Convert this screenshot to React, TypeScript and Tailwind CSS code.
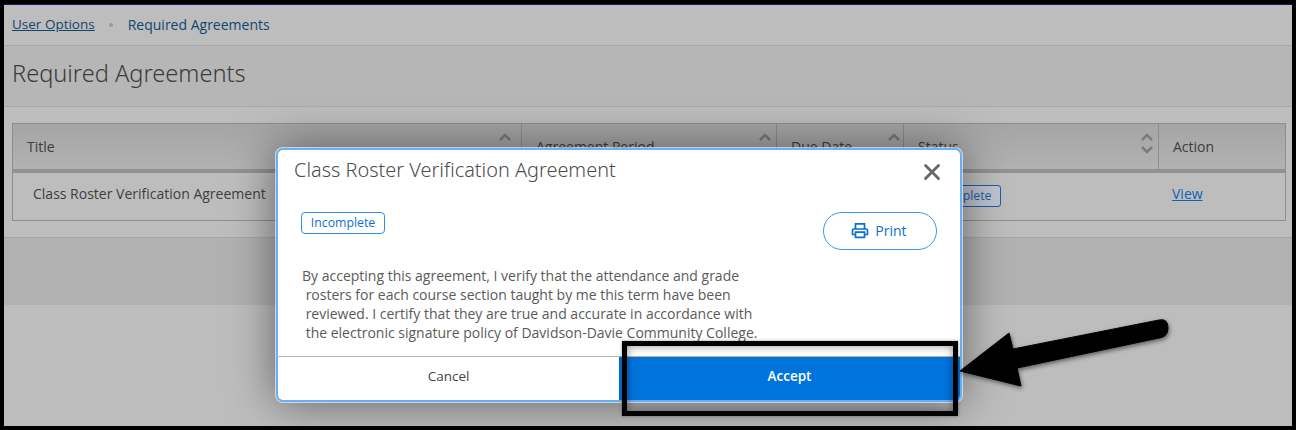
import React from "react";
import { X } from "lucide-react";

const Sort = ({ down = true, pos }: { down?: boolean; pos: string }) => (
  <div className={`absolute top-[9px] flex flex-col gap-[3px] ${pos}`}>
    <svg width="14" height="9" viewBox="0 0 14 9" fill="none" stroke="#7c7c7c" strokeWidth="2.6"><path d="M2 7l5-5 5 5" /></svg>
    {down ? <svg width="14" height="9" viewBox="0 0 14 9" fill="none" stroke="#7c7c7c" strokeWidth="2.6"><path d="M2 2l5 5 5-5" /></svg> : null}
  </div>
);

const Head = ({ label, pos, down, last }: { label: string; pos?: string; down?: boolean; last?: boolean }) => (
  <div className={`relative flex items-center pl-[14px] h-full ${last ? "" : "border-r border-[#8e8e8e]"}`}>
    <span>{label}</span>
    {pos ? <Sort down={down} pos={pos} /> : null}
  </div>
);

const Printer = () => (
  <svg width="18" height="17" viewBox="0 0 18 17" fill="none" stroke="#0b6fd0" strokeWidth="1.7">
    <path d="M4.5 7V1.8h9V7" />
    <path d="M4.5 12.5H1.5V8.5a1.5 1.5 0 0 1 1.5-1.5h12a1.5 1.5 0 0 1 1.5 1.5v4h-3" />
    <path d="M4.5 10.2h9v5.2h-9z" />
  </svg>
);

export default function App() {
  return (
    <div className="w-[1296px] h-[430px] bg-black pt-[4px] px-[4px] pb-[4px] overflow-hidden font-['Open_Sans',sans-serif]">
      <div className="relative w-full h-full bg-[#bdbdbd] border-t border-[#16186a] flex flex-col text-[14px] text-[#3d3d3d]">
        <div className="h-[41px] shrink-0 border-b border-[#aaaaaa] flex items-center pl-[8px] pb-[1px]">
          <a className="underline text-[13.5px] text-[#11456f]">User Options</a>
          <span className="w-[4px] h-[4px] ml-[14px] mr-[15px] bg-[#9a9a9a] rounded-full" />
          <span className="text-[#11456f]">Required Agreements</span>
        </div>
        <div className="h-[61px] shrink-0 bg-[#b6b6b6] border-b border-[#aaaaaa] flex items-center pl-[8px] pb-[5px]">
          <h1 className="text-[23.6px] font-light font-['Noto_Sans',sans-serif] text-[#3b3b3b]">Required Agreements</h1>
        </div>
        <div className="h-[131px] shrink-0 border-b border-[#a6a6a6] px-[8px] pt-[16px]">
          <div className="w-[1274px] h-[98px] border border-[#8e8e8e] flex flex-col">
            <div className="h-[45px] shrink-0 grid grid-cols-[509px_255px_127px_255px_126px] items-center bg-gradient-to-b from-[#a5a5a5] to-[#b2b2b2] border-b-[4px] border-[#929292] box-content">
              <Head label="Title" pos="right-[9px]" down={false} />
              <Head label="Agreement Period" pos="right-[4px]" down={false} />
              <Head label="Due Date" pos="right-[2px]" down={false} />
              <Head label="Status" pos="right-[4px]" />
              <Head label="Action" last />
            </div>
            <div className="flex-1 grid grid-cols-[509px_255px_127px_255px_126px] items-center pb-[7px]">
              <div className="pl-[20px]">Class Roster Verification Agreement</div>
              <div />
              <div />
              <div className="pl-[14px] pt-[5px]">
                <span className="inline-block border border-[#1b5da6] rounded-[3px] pl-[8px] pr-[9px] h-[22px] leading-[20px] text-[12.3px] text-[#1b5da6] bg-[#bcc4cf]">Incomplete</span>
              </div>
              <div className="pl-[13px]"><a className="underline text-[#0f62b5]">View</a></div>
            </div>
          </div>
        </div>
        <div className="h-[67px] shrink-0 bg-[#b1b1b1]" />
        <div className="flex-1" />

        {/* modal */}
        <div className="absolute left-[272px] top-[143px] w-[686px] h-[254px] bg-white border-2 border-[#68b0f4] rounded-[7px] shadow-[0_0_0_1px_rgba(255,255,255,0.6),0_0_45px_rgba(0,0,0,0.5)] flex flex-col overflow-hidden text-[#5a5a5a]">
          <div className="h-[62px] shrink-0 flex items-start justify-between pl-[16px] pr-[15px] pt-[7px]">
            <h2 className="text-[19.9px] leading-[26px] font-light font-['Noto_Sans',sans-serif] text-[#4c4c4c]">Class Roster Verification Agreement</h2>
            <X size={26} strokeWidth={2.6} color="#666666" className="mt-[2px]" />
          </div>
          <div className="flex-1 relative pl-[24px]">
            <div className="flex items-start justify-between pr-[23px]">
              <span className="h-[22px] w-[84px] -ml-[1px] border border-[#2e8de6] rounded-[4px] text-[12.3px] leading-[20px] text-center text-[#0b6fd0]">Incomplete</span>
              <button className="h-[38px] w-[114px] border border-[#3d97ec] rounded-full flex items-center justify-center gap-[6px] text-[#0b6fd0] text-[14px] -mb-[2px] pr-[2px] pb-[2px]">
                <Printer />Print
              </button>
            </div>
            <div className="mt-[18px] text-[14px] leading-[19px] whitespace-pre">
              {"By accepting this agreement, I verify that the attendance and grade\n rosters for each course section taught by me this term have been\n reviewed. I certify that they are true and accurate in accordance with\n the electronic signature policy of Davidson-Davie Community College."}
            </div>
          </div>
          <div className="h-[44px] shrink-0 border-t border-[#b5b5b5] flex text-[13.5px]">
            <button className="w-[341px] h-full text-[#444444] pb-[5px]">Cancel</button>
            <button className="flex-1 h-full bg-[#0073dc] text-white font-semibold pb-[5px]">Accept</button>
          </div>
        </div>

        {/* annotation */}
        <div className="absolute left-[618px] top-[336px] w-[336px] h-[75px] border-[5px] border-black shadow-[inset_0_0_8px_rgba(0,0,0,0.45),0_0_3px_rgba(0,0,0,0.4)]" />
        <svg className="absolute left-[950px] top-[310px]" width="225" height="85" viewBox="0 0 225 85" style={{ filter: "drop-shadow(1px 2px 2px rgba(0,0,0,0.5))" }}>
          <path d="M6 56 L55 18 L59 34 L205 5 Q214 3 214 13 Q214 22 205 23 L63 53 L67 71 Z" fill="black" stroke="black" strokeLinejoin="round" />
        </svg>
      </div>
    </div>
  );
}
